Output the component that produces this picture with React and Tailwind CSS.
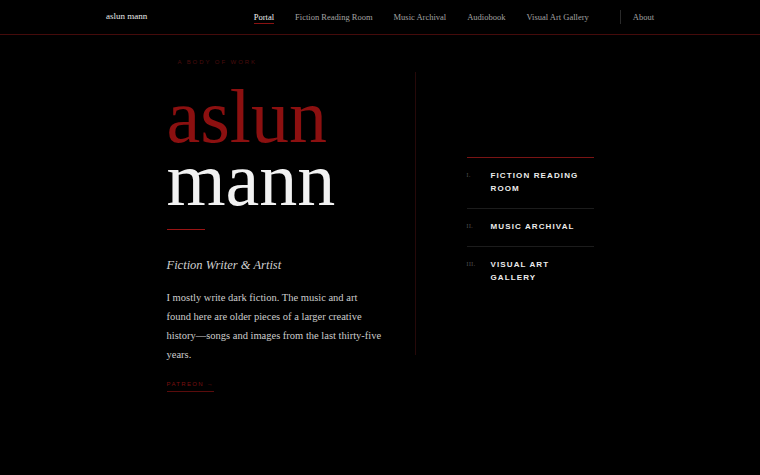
const serif = { fontFamily: '"Liberation Serif", "DejaVu Serif", serif' };
const sans = { fontFamily: '"Liberation Sans", Arial, sans-serif' };

const navItems = ['Portal', 'Fiction Reading Room', 'Music Archival', 'Audiobook', 'Visual Art Gallery'];

const rooms = [
  { num: 'I.', title: 'FICTION READING ROOM' },
  { num: 'II.', title: 'MUSIC ARCHIVAL' },
  { num: 'III.', title: 'VISUAL ART GALLERY' },
];

// ===== HEADER =====
const Header = () => (
  <header className="h-[35px] border-b border-[#450b0b] flex items-center">
    <div className="w-[548px] mx-auto flex items-center justify-between" style={serif}>
      <span className="text-[9px] text-[#e8e8e8]">aslun mann</span>
      <nav className="flex items-center">
        <div className="flex items-center gap-[21px]">
          {navItems.map((item, i) => (
            <span
              key={item}
              className={`relative text-[8.5px] leading-[12px] ${i === 0 ? 'text-[#f0f0f0]' : 'text-[#a3a3a3]'}`}
            >
              {item}
              {i === 0 && <span className="absolute left-0 right-0 -bottom-[1px] h-px bg-[#8a1212]" />}
            </span>
          ))}
        </div>
        <div className="ml-[31px] w-px h-[14px] bg-[#2a2a2a]" />
        <span className="ml-[12px] text-[8.5px] text-[#a3a3a3]">About</span>
      </nav>
    </div>
  </header>
);

// ===== COMPOSANT PRINCIPAL =====
export default function App() {
  return (
    <div className="min-h-[475px] w-full bg-black overflow-hidden">
      <Header />

      <main className="w-[427px] mx-auto flex items-start">
        {/* Colonne gauche */}
        <div className="w-[219px] shrink-0" style={serif}>
          <p className="mt-[22px] pl-[11px] text-[6px] leading-[10px] tracking-[0.32em] text-[#4a0d0d]" style={sans}>
            A BODY OF WORK
          </p>
          <h1 className="mt-[18px] text-[76px] leading-[63px] font-normal">
            <span className="block text-[#8c1010]">aslun</span>
            <span className="block text-[#f2f2f2]">mann</span>
          </h1>
          <div className="mt-[18px] w-[38px] h-px bg-[#9a1414]" />
          <p className="mt-[25px] italic text-[12.5px] leading-[20px] text-[#cfcfcf]">
            Fiction Writer &amp; Artist
          </p>
          <p className="mt-[13px] w-[216.5px] text-[10.5px] leading-[19px] text-[#cdcdcd]">
            I mostly write dark fiction. The music and art found here are older pieces of a larger creative{' '}
            <span className="whitespace-nowrap">history—songs</span> and images from the last thirty-five years.
          </p>
          <span
            className="inline-block mt-[15px] pb-[2px] border-b border-[#5a0c0c] text-[6px] leading-[10px] tracking-[0.22em] text-[#7a1010]"
            style={sans}
          >
            PATREON →
          </span>
        </div>

        {/* Ligne verticale */}
        <div className="ml-[29px] mt-[37px] w-px h-[283px] bg-[#260909] shrink-0" />

        {/* Colonne droite */}
        <div className="ml-[51px] mt-[122px] w-[127px] shrink-0 border-t border-[#7a1414]">
          {rooms.map((room, i) => (
            <div
              key={room.num}
              className={`flex pt-[11px] pb-[13px] ${i < rooms.length - 1 ? 'border-b border-[#1c1c1c]' : ''}`}
            >
              <span className="w-[24px] shrink-0 text-[5.5px] leading-[13px] text-[#5a5a5a] tracking-[0.1em]" style={serif}>
                {room.num}
              </span>
              <span className="text-[8px] leading-[13px] font-bold tracking-[0.14em] text-[#ececec]" style={sans}>
                {room.title}
              </span>
            </div>
          ))}
        </div>
      </main>
    </div>
  );
}
